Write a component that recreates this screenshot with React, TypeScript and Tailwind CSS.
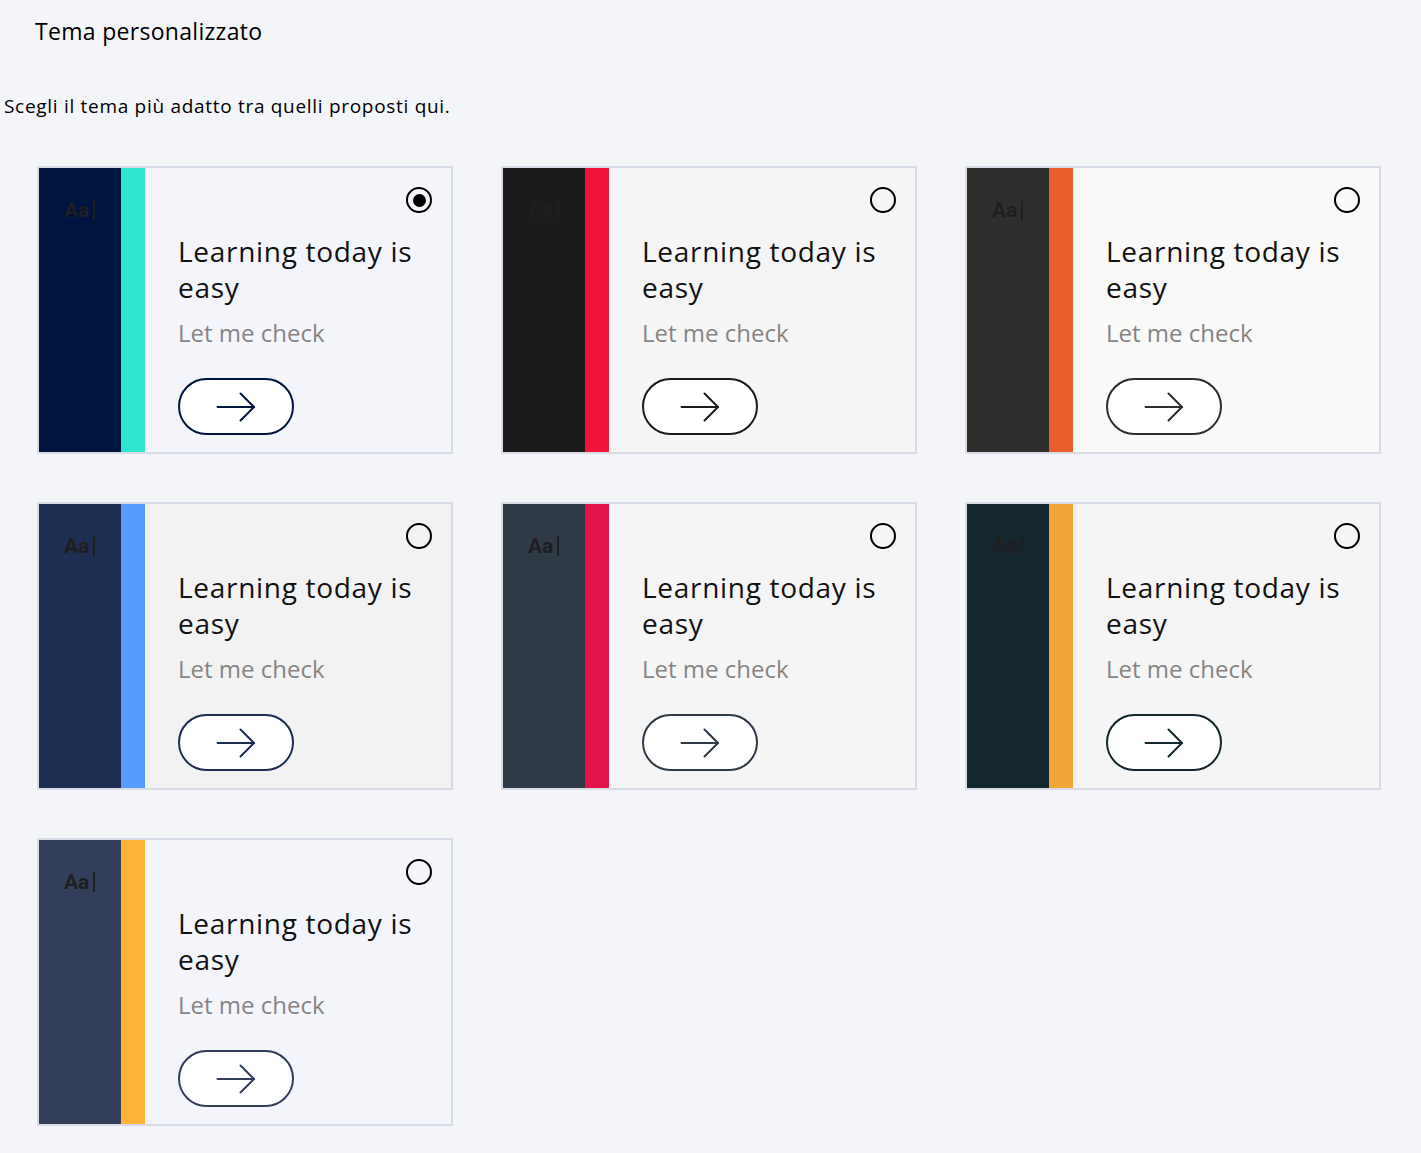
const THEMES = [
  { dark: '#001440', accent: '#2ee6cf', bg: '#f4f5fa', selected: true },
  { dark: '#1b1b1b', accent: '#f0143c', bg: '#f5f5f5' },
  { dark: '#302e2c', accent: '#e85f2c', bg: '#f9f9f7' },
  { dark: '#1e2d52', accent: '#579cfc', bg: '#f2f2f2' },
  { dark: '#2f3a47', accent: '#e2124a', bg: '#f5f5f5' },
  { dark: '#14262e', accent: '#f2a536', bg: '#f5f5f5' },
  { dark: '#333f5a', accent: '#feb23a', bg: '#f4f5fa' },
]

function Arrow({ color }: { color: string }) {
  return (
    <svg width="40" height="30" viewBox="0 0 40 30" fill="none" stroke={color} strokeWidth="2" strokeLinecap="round" strokeLinejoin="round">
      <path d="M1.5 15H38" />
      <path d="M24.5 1.5L38 15L24.5 28.5" />
    </svg>
  )
}

function ThemeCard({ dark, accent, bg, selected }: { dark: string; accent: string; bg: string; selected?: boolean }) {
  return (
    <div className="flex h-[288px] border-2 border-[#d8dae5]">
      <div className="w-[82px] shrink-0 pt-[30px] pl-[25px]" style={{ backgroundColor: dark }}>
        <div className="flex items-center text-[21px] font-bold leading-[24px] text-[#1f1f1f] font-['Roboto',sans-serif]">
          <span>Aa</span>
          <span className="ml-[4px] h-[20px] w-[2px] bg-[#1f1f1f]" />
        </div>
      </div>
      <div className="w-[24px] shrink-0" style={{ backgroundColor: accent }} />
      <div className="flex flex-1 flex-col pl-[33px] pr-[19px] pt-[19px]" style={{ backgroundColor: bg }}>
        <div className="flex justify-end">
          <div className="flex h-[26px] w-[26px] items-center justify-center rounded-full border-2 border-black">
            {selected && <div className="h-[13px] w-[13px] rounded-full bg-black" />}
          </div>
        </div>
        <p className="mt-[20px] text-[28px] leading-[36px] tracking-[0.7px] text-[#111]">Learning today is easy</p>
        <p className="mt-[12px] text-[24px] leading-[32px] text-[#858585]">Let me check</p>
        <button
          className="mt-[29px] flex h-[57px] w-[116px] items-center justify-center rounded-full border-2 bg-white"
          style={{ borderColor: dark }}
        >
          <Arrow color={dark} />
        </button>
      </div>
    </div>
  )
}

export default function App() {
  return (
    <div className="min-h-[1153px] bg-[#f4f5f9] font-['Open_Sans',sans-serif] text-black">
      <h1 className="pl-[35px] pt-[15px] text-[23px] font-medium leading-[32px] tracking-[0.3px]">Tema personalizzato</h1>
      <p className="mt-[45px] pl-[4px] text-[19px] leading-[28px] tracking-[0.7px]">Scegli il tema più adatto tra quelli proposti qui.</p>
      <div className="mt-[46px] grid grid-cols-[repeat(3,416px)] gap-[48px] pl-[37px]">
        {THEMES.map((t, i) => (
          <ThemeCard key={i} {...t} />
        ))}
      </div>
    </div>
  )
}
